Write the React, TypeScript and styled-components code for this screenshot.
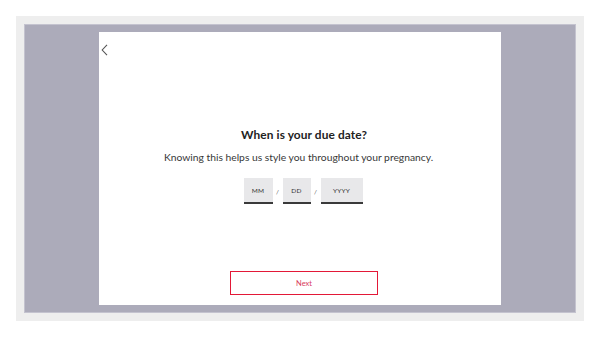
import React from "react";
import styled, { createGlobalStyle } from "styled-components";

const Global = createGlobalStyle`
  html, body { margin: 0; padding: 0; background: #ffffff; }
  body { font-family: Lato, "Open Sans", "Liberation Sans", sans-serif; }
  * { box-sizing: border-box; }
`;

const Page = styled.div`
  width: 600px;
  height: 337px;
  padding: 16px;
`;

const Frame = styled.div`
  width: 568px;
  height: 305px;
  background: #eeeeee;
  padding: 8px;
`;

const Backdrop = styled.div`
  width: 552px;
  height: 289px;
  background: #acabba;
  border: 1px solid #c4c3cf;
  padding: 7px 0 0 74px;
`;

const Panel = styled.div`
  width: 402px;
  height: 273px;
  background: #ffffff;
  display: flex;
  flex-direction: column;
  align-items: center;
`;

const TopBar = styled.div`
  align-self: stretch;
  height: 26px;
  padding: 12px 0 0 2px;
`;

const BackButton = styled.button`
  border: none;
  background: none;
  padding: 0;
  width: 7px;
  height: 12px;
  display: block;
  cursor: pointer;
`;

const Title = styled.h1`
  margin: 69px 0 0 8px;
  font-size: 11.9px;
  font-weight: 700;
  color: #222222;
  line-height: 16px;
  letter-spacing: 0.1px;
`;

const Subtitle = styled.p`
  margin: 8px 0 0 -3px;
  font-size: 10.3px;
  color: #383838;
  line-height: 12px;
`;

const DateRow = styled.div`
  margin: 15px 0 0 6px;
  display: flex;
  align-items: center;
`;

const Field = styled.div<{ $w: number }>`
  width: ${(p) => p.$w}px;
  height: 26px;
  background: #e8e8ea;
  border-bottom: 2px solid #3a3a3a;
  display: flex;
  align-items: center;
  justify-content: center;
  font-size: 6.5px;
  color: #333333;
  letter-spacing: 0.2px;
`;

const Slash = styled.span`
  width: 10px;
  text-align: center;
  font-size: 6.5px;
  color: #555555;
`;

const Spacer = styled.div`
  flex: 1;
`;

const NextButton = styled.button`
  width: 148px;
  height: 24px;
  margin: 0 0 10px 8px;
  border: 1.5px solid #e31837;
  background: #ffffff;
  color: #d83a5c;
  font-family: Lato, "Open Sans", "Liberation Sans", sans-serif;
  font-size: 7.5px;
  padding: 0;
  cursor: pointer;
`;

export default function App() {
  return (
    <>
      <Global />
      <Page>
        <Frame>
          <Backdrop>
            <Panel>
              <TopBar>
                <BackButton aria-label="Back">
                  <svg width="7" height="12" viewBox="0 0 7 12">
                    <path d="M6 0.8 L1.2 6 L6 11.2" fill="none" stroke="#555" strokeWidth="1.1" />
                  </svg>
                </BackButton>
              </TopBar>
              <Title>When is your due date?</Title>
              <Subtitle>Knowing this helps us style you throughout your pregnancy.</Subtitle>
              <DateRow>
                <Field $w={29}>MM</Field>
                <Slash>/</Slash>
                <Field $w={28}>DD</Field>
                <Slash>/</Slash>
                <Field $w={42}>YYYY</Field>
              </DateRow>
              <Spacer />
              <NextButton>Next</NextButton>
            </Panel>
          </Backdrop>
        </Frame>
      </Page>
    </>
  );
}
